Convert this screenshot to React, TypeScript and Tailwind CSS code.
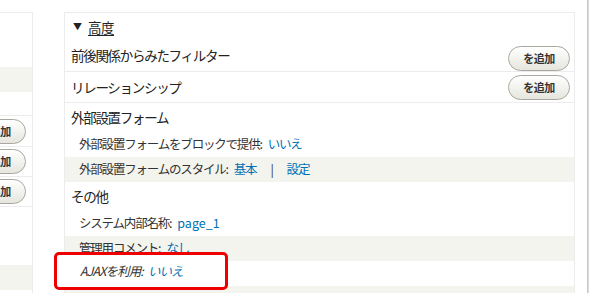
import React from "react";

const jp = { fontFamily: '"Noto Sans CJK JP", "Noto Sans", sans-serif' };

function AddButton() {
  return (
    <button className="shrink-0 w-[62px] h-[25px] rounded-full border border-[#a8a8a0] bg-gradient-to-b from-[#ffffff] to-[#e6e6de] text-[11px] font-bold text-[#333] tracking-[-0.5px] shadow-[inset_0_1px_0_#fff] flex items-center justify-center">
      を追加
    </button>
  );
}

function LeftPanel() {
  return (
    <div className="w-[33px] shrink-0 mt-[12px] border-t border-r border-[#ececec] overflow-hidden flex flex-col">
      <div className="h-[54px] shrink-0" />
      <div className="h-[25px] shrink-0 bg-[#f3f4ee]" />
      <div className="h-[24px] shrink-0 border-b border-[#ececec]" />
      <div className="h-[31px] shrink-0 flex items-center justify-end pr-[6px] border-b border-[#ececec]">
        <AddButton />
      </div>
      <div className="h-[30px] shrink-0 flex items-center justify-end pr-[6px] border-b border-[#ececec]">
        <AddButton />
      </div>
      <div className="h-[30px] shrink-0 flex items-center justify-end pr-[6px] border-b border-[#ececec]">
        <AddButton />
      </div>
      <div className="h-[58px] shrink-0" />
      <div className="h-[25px] shrink-0 bg-[#f3f4ee]" />
    </div>
  );
}

function SubRow({ gray, children }: { gray?: boolean; children?: React.ReactNode }) {
  return (
    <div
      className={`h-[25px] shrink-0 flex items-center pl-[14px] text-[12.5px] tracking-[-1.2px] text-[#333] ${
        gray ? "bg-[#f3f4ee]" : ""
      }`}
    >
      {children}
    </div>
  );
}

export default function App() {
  return (
    <div className="w-[600px] h-[293px] bg-white overflow-hidden flex relative" style={jp}>
      <LeftPanel />
      <div className="w-[31px] shrink-0" />
      <div className="w-[511px] shrink-0 mt-[12px] border-t border-l border-r border-[#ececec] flex flex-col">
        <div className="h-[28px] shrink-0 flex items-center pl-[8px] text-[13.5px] text-[#222]">
          <span className="text-[9px] mr-[6px]">▼</span>
          <span className="underline underline-offset-2 tracking-[-0.5px]">高度</span>
        </div>
        <div className="h-[31px] shrink-0 flex items-start justify-between pl-[6px] pr-[4px] border-b border-[#ececec] text-[13.5px] tracking-[-1.3px] text-[#222]">
          <span className="mt-[4px]">前後関係からみたフィルター</span>
          <div className="mt-[5px] tracking-normal">
            <AddButton />
          </div>
        </div>
        <div className="h-[31px] shrink-0 flex items-center justify-between pl-[6px] pr-[4px] border-b border-[#ececec] text-[13.5px] tracking-[-1.3px] text-[#222]">
          <span>リレーションシップ</span>
          <div className="tracking-normal">
            <AddButton />
          </div>
        </div>
        <div className="h-[29px] shrink-0 flex items-center pl-[6px] text-[13.5px] tracking-[-1.3px] text-[#222]">
          外部設置フォーム
        </div>
        <SubRow>
          外部設置フォームをブロックで提供:
          <span className="ml-[6px] text-[#0071b3]">いいえ</span>
        </SubRow>
        <SubRow gray>
          外部設置フォームのスタイル:
          <span className="ml-[6px] text-[#0071b3]">基本</span>
          <span className="mx-[14px] text-[#333]">|</span>
          <span className="text-[#0071b3]">設定</span>
        </SubRow>
        <div className="h-[29px] shrink-0 flex items-center pl-[6px] text-[13.5px] tracking-[-1.3px] text-[#222]">
          その他
        </div>
        <SubRow>
          システム内部名称:
          <span className="ml-[6px] text-[#0071b3] tracking-normal">page_1</span>
        </SubRow>
        <SubRow gray>
          管理用コメント:
          <span className="ml-[6px] text-[#0071b3]">なし</span>
        </SubRow>
        <SubRow />
        <SubRow gray />
      </div>
      <div className="w-[12px] shrink-0" />
      <div className="w-[2px] shrink-0 bg-gradient-to-r from-[#bdbdbd] to-[#e6e6e6]" />

      <div className="absolute left-[54px] top-[252px] w-[174px] h-[38px] border-[3px] border-[#ee0000] rounded-[5px] bg-white flex items-center pl-[23px] text-[12.5px] tracking-[-0.9px] italic text-[#333]">
        AJAXを利用:
        <span className="ml-[5px] text-[#0071b3]">いいえ</span>
      </div>
    </div>
  );
}
